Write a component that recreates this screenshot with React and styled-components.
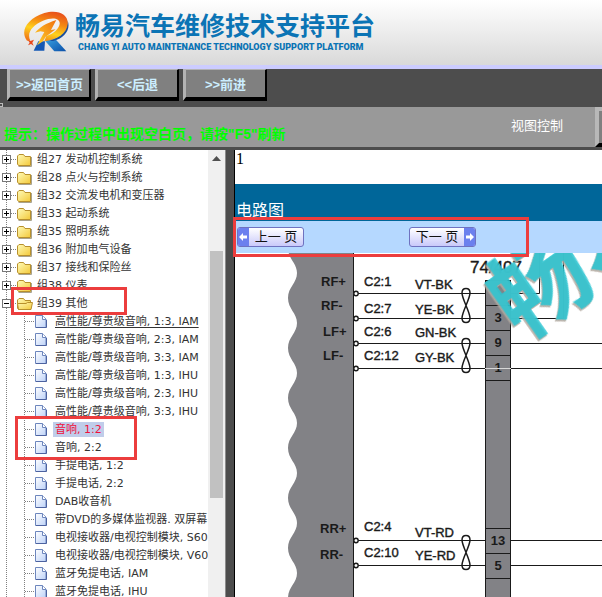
import React from 'react';
import styled, { createGlobalStyle } from 'styled-components';

const GlobalStyle = createGlobalStyle`
  * {
    box-sizing: border-box;
  }
  body {
    margin: 0;
    overflow: hidden;
    background: white;
  }
`;
const sans = '"Liberation Sans", "Noto Sans CJK SC", sans-serif';
const serif = '"Liberation Serif", "Noto Sans CJK SC", serif';

const Page = styled.div`
  display: flex;
  flex-direction: column;
  height: 100vh;
  font-family: ${sans};
`;
const Header = styled.header`
  display: flex;
  flex: none;
  align-items: center;
  gap: 6px;
  height: 69px;
  padding: 0 0 4px 23px;
  border-bottom: 4px solid #ccccff;
  background: linear-gradient(#ffffff, #d9d9d9);
`;
const Brand = styled.div`
  display: flex;
  flex-direction: column;
  padding-top: 4px;
  color: #0b74b5;
  font-weight: bold;
  white-space: nowrap;
`;
const BrandName = styled.h1`
  margin: 0;
  font-size: 25px;
  line-height: 28px;
`;
const BrandSub = styled.span`
  padding-left: 3px;
  font-family: Roboto, sans-serif;
  font-size: 9px;
  font-weight: 900;
  line-height: 14px;
`;
const Nav = styled.nav`
  display: flex;
  flex: none;
  align-items: flex-start;
  gap: 4px;
  height: 38px;
  background: #4d4d4d;
`;
const Mark = styled.span`
  align-self: flex-end;
  width: 3px;
  height: 4px;
  border: 1px solid #bbbbbb;
  border-left: 0;
`;
const NavButton = styled.button`
  width: 84px;
  height: 32px;
  padding: 0;
  border-style: solid;
  border-width: 1px 2px 4px 3px;
  border-color: #b3b3b3 black black #b3b3b3;
  background: #808080;
  color: #cceeff;
  font: bold 13px ${sans};
`;
const Notice = styled.div`
  display: flex;
  flex: none;
  align-items: flex-start;
  justify-content: space-between;
  height: 43px;
  border-bottom: 3px solid #4d4d4d;
  background: #999999;
  overflow: hidden;
`;
const Tip = styled.p`
  margin: 0;
  padding: 17px 0 0 4px;
  color: #00ff00;
  font-size: 14px;
  font-weight: bold;
  line-height: 20px;
  white-space: nowrap;
`;
const ViewTools = styled.div`
  display: flex;
  gap: 32px;
  margin-right: -33px;
  color: white;
  font-size: 13px;
  line-height: 38px;
  white-space: nowrap;
`;
const ViewButton = styled.button`
  width: 40px;
  height: 40px;
  border-style: solid;
  border-width: 4px;
  border-color: #b8b8b8 black black #b8b8b8;
  background: #808080;
`;
const Frames = styled.div`
  display: flex;
  flex: 1;
  min-height: 0;
`;
const Sidebar = styled.aside`
  position: relative;
  display: flex;
  flex: 0 0 225px;
  overflow: hidden;
`;
const Tree = styled.ul`
  flex: 1;
  min-width: 0;
  margin: 0;
  padding: 0;
  list-style: none;
  overflow: hidden;
  background: white;
`;
const TreeRow = styled.li`
  display: flex;
  align-items: center;
  height: 18px;
  white-space: nowrap;
  svg {
    flex: none;
  }
  svg.icon {
    margin-left: -1px;
  }
`;
const TreeLink = styled.a`
  padding: 0 2px;
  background: ${props => (props.$selected ? '#c0cdea' : 'transparent')};
  color: ${props => (props.$selected ? '#f0103c' : '#333333')};
  font: 11px/15px "DejaVu Sans", "Noto Sans CJK SC", sans-serif;
  text-decoration: ${props => (props.$underline ? 'underline' : 'none')};
  text-underline-offset: 2px;
`;
const ScrollTrack = styled.div`
  display: flex;
  flex: 0 0 17px;
  flex-direction: column;
  align-items: center;
  padding-bottom: 17px;
  background: #f0f0f0;
`;
const ScrollSpace = styled.span`
  flex: ${props => props.$grow};
`;
const ScrollThumb = styled.span`
  flex: 247;
  width: 13px;
  background: #c1c1c1;
`;
const Splitter = styled.div`
  flex: 0 0 10px;
  border-left: 1px solid #8c8c8c;
  border-right: 1px solid black;
  background: #4d4d4d;
`;
const Main = styled.main`
  display: flex;
  flex: 1;
  flex-direction: column;
  min-width: 0;
  background: white;
`;
const PageNumber = styled.p`
  flex: none;
  height: 34px;
  margin: 0;
  padding-left: 1px;
  font: 16px/18px ${serif};
`;
const Title = styled.h2`
  flex: none;
  height: 37px;
  margin: 0;
  padding: 16px 0 0 1px;
  background: #006699;
  color: white;
  font: 16px/21px ${serif};
`;
const Pager = styled.div`
  position: relative;
  display: flex;
  flex: none;
  align-items: center;
  gap: 105px;
  height: 32px;
  padding-left: 2px;
  background: #b5d8ff;
`;
const PageButton = styled.button`
  display: flex;
  align-items: stretch;
  justify-content: space-between;
  width: 67px;
  height: 20px;
  padding: 0;
  border: 1px solid #6f72c0;
  border-radius: 3px;
  overflow: hidden;
  background: linear-gradient(#ffffff, #c9c9fa);
  color: #111111;
  font: 13px/17px ${sans};
  svg {
    flex: none;
    background: #6c80ee;
  }
  span {
    flex: 1;
  }
`;
const Highlight = styled.div`
  position: absolute;
  top: ${props => props.$top}px;
  left: ${props => props.$left}px;
  width: ${props => props.$width}px;
  height: ${props => props.$height}px;
  border: 3px solid #ec3d3d;
  z-index: 2;
  pointer-events: none;
`;
const Diagram = styled.div`
  flex: 1;
  min-height: 0;
  overflow: hidden;
  svg {
    display: block;
  }
`;
const Label = styled.text`
  fill: #1a1a1a;
  font-family: ${sans};
  font-size: ${props => props.$size || 13}px;
  font-weight: ${props => (props.$bold ? 'bold' : 'normal')};
  stroke: #1a1a1a;
  stroke-width: ${props => (props.$bold ? 0 : 0.4)};
`;
const Watermark = styled.text`
  fill: #2cc5d2;
  fill-opacity: 0.88;
  filter: drop-shadow(-2px 1px 0 #b3aaa0);
  font-family: "Noto Sans CJK SC", sans-serif;
  font-size: 98px;
  font-weight: bold;
`;

const groups = [
  '组27 发动机控制系统',
  '组28 点火与控制系统',
  '组32 交流发电机和变压器',
  '组33 起动系统',
  '组35 照明系统',
  '组36 附加电气设备',
  '组37 接线和保险丝',
  '组38 仪表',
  '组39 其他',
];
const documents = [
  '高性能/尊贵级音响, 1:3, IAM',
  '高性能/尊贵级音响, 2:3, IAM',
  '高性能/尊贵级音响, 3:3, IAM',
  '高性能/尊贵级音响, 1:3, IHU',
  '高性能/尊贵级音响, 2:3, IHU',
  '高性能/尊贵级音响, 3:3, IHU',
  '音响, 1:2',
  '音响, 2:2',
  '手提电话, 1:2',
  '手提电话, 2:2',
  'DAB收音机',
  '带DVD的多媒体监视器. 双屏幕',
  '电视接收器/电视控制模块, S60',
  '电视接收器/电视控制模块, V60',
  '蓝牙免提电话, IAM',
  '蓝牙免提电话, IHU',
];

function Logo() {
  return (
    <svg width="46" height="42" viewBox="40 28 138 126" aria-hidden="true">
      <defs>
        <linearGradient id="ring" x1="0.7" y1="0" x2="0.3" y2="1">
          <stop offset="0" stopColor="#e8501c" />
          <stop offset="0.35" stopColor="#f58a12" />
          <stop offset="0.65" stopColor="#ffd21c" />
          <stop offset="1" stopColor="#f07818" />
        </linearGradient>
        <linearGradient id="bolt" x1="1" y1="0" x2="0" y2="1">
          <stop offset="0" stopColor="#f0700e" />
          <stop offset="1" stopColor="#ffd52a" />
        </linearGradient>
        <linearGradient id="leg" x1="0" y1="0" x2="1" y2="1">
          <stop offset="0" stopColor="#3ba7e6" />
          <stop offset="1" stopColor="#0b4fa8" />
        </linearGradient>
      </defs>
      <path d="M86 122 L106 122 L104 150 L72 150 Z" fill="#1558b4" />
      <path d="M106 120 L132 110 L170 152 L134 152 Z" fill="url(#leg)" />
      <path d="M174 60 C184 86 164 114 130 121 L120 121 C152 106 172 90 174 60 Z" fill="#1c4f9c" />
      <path
        fillRule="evenodd"
        fill="url(#ring)"
        d="M52 120 C30 92 52 54 104 37 C146 25 177 42 174 70 C172 98 142 118 104 122 L110 106 C132 100 148 84 150 70 C152 52 128 48 100 60 C68 74 50 96 62 120 Z"
      />
      <path d="M76 96 C90 80 108 68 140 58 L124 88 L138 86 L108 108 L100 122 L82 134 L104 94 L92 92 Z" fill="url(#bolt)" />
      <path d="M54 117 L62 121 L73 117 L68 126 L72 135 L64 130 L55 134 L60 126 Z" fill="#e8481c" />
    </svg>
  );
}

function Joint({ sign }) {
  return (
    <svg width="18" height="18" aria-hidden="true">
      <g stroke="#808080" strokeDasharray="1 1">
        <line x1="6.5" x2="6.5" y1="0" y2="18" />
        {sign !== 'none' && <line x1="7" x2="18" y1="9.5" y2="9.5" />}
      </g>
      {(sign === 'plus' || sign === 'minus') && (
        <g>
          <rect x="2.5" y="5.5" width="8" height="8" fill="white" stroke="#777777" />
          <line x1="4" x2="9" y1="9.5" y2="9.5" stroke="black" />
          {sign === 'plus' && <line x1="6.5" x2="6.5" y1="7" y2="12" stroke="black" />}
        </g>
      )}
    </svg>
  );
}

function Folder({ open }) {
  return (
    <svg className="icon" width="18" height="18" aria-hidden="true">
      <defs>
        <linearGradient id="folder" x1="0" y1="0" x2="1" y2="1">
          <stop offset="0" stopColor="#fffbb8" />
          <stop offset="1" stopColor="#f3c93a" />
        </linearGradient>
      </defs>
      <path d="M0.5 14 V6 L2 4.5 H6.5 L8 6.5 H13.5 V15.5 H1.5 Z" fill="url(#folder)" stroke="#b8902c" />
      {open
        ? <path d="M1.5 15.5 L0.5 9.5 H9 L10.5 8.5 H15.5 L14 15.5 Z" fill="url(#folder)" stroke="#b8902c" />
        : <path d="M1.5 16.5 H14.5 V7" fill="none" stroke="#a9a38e" />}
    </svg>
  );
}

function Doc() {
  return (
    <svg className="icon" width="18" height="18" aria-hidden="true">
      <defs>
        <linearGradient id="doc" x1="0" y1="0" x2="1" y2="1">
          <stop offset="0" stopColor="#ffffff" />
          <stop offset="1" stopColor="#bdd2f8" />
        </linearGradient>
      </defs>
      <path d="M0.5 3.5 H7.5 L11 7 V15.5 H0.5 Z" fill="url(#doc)" stroke="#6d86bd" />
      <path d="M7.5 3.5 V7.5 H11" fill="white" stroke="#6d86bd" />
      <path d="M1 15.5 H11.5 V8" fill="none" stroke="#4c62a0" />
    </svg>
  );
}

// torn edge of the control unit, one bulge every 50px
function waveEdge() {
  let d = 'M118 -30 H62';
  for (let y = -30; y < 700; y += 50) {
    d += ` C62 ${y + 10} 53 ${y + 14} 53 ${y + 25} C53 ${y + 36} 62 ${y + 40} 62 ${y + 50}`;
  }
  return `${d} H118 Z`;
}

function Twist({ y }) {
  return (
    <path
      transform={`translate(231 ${y})`}
      d="M-4 0 C-4 -6 4 -6 4 0 C4 6 -4 19 -4 25 C-4 31 4 31 4 25 C4 19 -4 6 -4 0 Z"
      fill="none"
      stroke="#1a1a1a"
      strokeWidth="1.5"
    />
  );
}

const pins = [
  { y: 40, name: 'RF+', nameX: 86, nameY: 33, pin: 'C2:1', pinY: 33, wire: 'VT-BK', wireY: 36 },
  { y: 65, name: 'RF-', nameX: 86, nameY: 57, pin: 'C2:7', pinY: 60, wire: 'YE-BK', wireY: 61 },
  { y: 90, name: 'LF+', nameX: 88, nameY: 83, pin: 'C2:6', pinY: 83, wire: 'GN-BK', wireY: 84 },
  { y: 115, name: 'LF-', nameX: 88, nameY: 107, pin: 'C2:12', pinY: 107, wire: 'GY-BK', wireY: 109 },
  { y: 287, name: 'RR+', nameX: 85, nameY: 280, pin: 'C2:4', pinY: 278, wire: 'VT-RD', wireY: 284 },
  { y: 312, name: 'RR-', nameX: 85, nameY: 306, pin: 'C2:10', pinY: 304, wire: 'YE-RD', wireY: 307 },
];
const slots = [
  { n: '3', y: 69 },
  { n: '9', y: 94 },
  { n: '1', y: 119 },
  { n: '13', y: 292 },
  { n: '5', y: 317 },
];

function Circuit() {
  return (
    <svg width="1600" height="700" role="img" aria-label="电路图">
      <path d={waveEdge()} fill="#828286" />
      <line x1="118.5" x2="118.5" y1="0" y2="700" stroke="#1a1a1a" />
      <rect x="250.5" y="27.5" width="25" height="680" fill="#828286" stroke="#1a1a1a" />
      {[52, 77, 102, 127, 275, 300, 325].map(y => (
        <line key={y} x1="250" x2="276" y1={y + 0.5} y2={y + 0.5} stroke="#1a1a1a" />
      ))}
      {pins.map(pin => (
        <g key={pin.name}>
          <line x1="118" x2="250" y1={pin.y + 0.5} y2={pin.y + 0.5} stroke="#1a1a1a" />
          {pin.y > 80 && <line x1="276" x2="1600" y1={pin.y + 0.5} y2={pin.y + 0.5} stroke="#1a1a1a" />}
          <circle cx="121" cy={pin.y + 0.5} r="2.2" fill="white" stroke="#1a1a1a" strokeWidth="1.4" />
          <Label $bold x={pin.nameX} y={pin.nameY}>{pin.name}</Label>
          <Label x="129" y={pin.pinY}>{pin.pin}</Label>
          <Label x="180" y={pin.wireY}>{pin.wire}</Label>
        </g>
      ))}
      <path d="M276 40.5 H304.5 V0 M276 65.5 H328.5 V0" fill="none" stroke="#1a1a1a" />
      <Twist y={40} />
      <Twist y={90} />
      <Twist y={287} />
      <Label $size={17} x="235" y="20">74/407</Label>
      {slots.map(slot => (
        <Label $bold key={slot.n} x="263" y={slot.y} textAnchor="middle">{slot.n}</Label>
      ))}
      <line x1="250" x2="276" y1="115.5" y2="115.5" stroke="#d8d8d8" />
      <g transform="translate(285 89) rotate(-35)">
        <Watermark>畅易</Watermark>
      </g>
    </svg>
  );
}

function Arrow({ back }) {
  return (
    <svg width="11" height="18" aria-hidden="true">
      <path
        d={back ? 'M1 9 L5 5 V7.5 H9 V10.5 H5 V13 Z' : 'M10 9 L6 5 V7.5 H2 V10.5 H6 V13 Z'}
        fill="white"
      />
    </svg>
  );
}

class App extends React.PureComponent {
  render() {
    return (
      <Page>
        <GlobalStyle />
        <Header>
          <Logo />
          <Brand>
            <BrandName>畅易汽车维修技术支持平台</BrandName>
            <BrandSub>CHANG YI AUTO MAINTENANCE TECHNOLOGY SUPPORT PLATFORM</BrandSub>
          </Brand>
        </Header>
        <Nav>
          <Mark />
          <NavButton>&gt;&gt;返回首页</NavButton>
          <NavButton>&lt;&lt;后退</NavButton>
          <NavButton>&gt;&gt;前进</NavButton>
        </Nav>
        <Notice>
          <Tip>提示：操作过程中出现空白页，请按"F5"刷新</Tip>
          <ViewTools>
            <span>视图控制</span>
            <ViewButton aria-label="视图控制" />
          </ViewTools>
        </Notice>
        <Frames>
          <Sidebar>
            <Tree>
              {groups.map((name, key) => {
                const open = key === groups.length - 1;
                return (
                  <TreeRow key={name}>
                    <Joint sign={open ? 'minus' : 'plus'} />
                    <Folder open={open} />
                    <TreeLink href="#">{name}</TreeLink>
                  </TreeRow>
                );
              })}
              {documents.map((name, key) => (
                <TreeRow key={name}>
                  <Joint sign="none" />
                  <Joint />
                  <Doc />
                  <TreeLink href="#" $underline={key === 0} $selected={key === 6}>{name}</TreeLink>
                </TreeRow>
              ))}
            </Tree>
            <ScrollTrack>
              <svg width="17" height="17" aria-hidden="true">
                <path d="M4 11 L8.5 6 L13 11 Z" fill="#505050" />
              </svg>
              <ScrollSpace $grow={84} />
              <ScrollThumb />
              <ScrollSpace $grow={82} />
            </ScrollTrack>
            <Highlight $top={137} $left={11} $width={116} $height={28} />
            <Highlight $top={266} $left={15} $width={122} $height={44} />
          </Sidebar>
          <Splitter />
          <Main>
            <PageNumber>1</PageNumber>
            <Title>电路图</Title>
            <Pager>
              <PageButton>
                <Arrow back />
                <span>上一 页</span>
              </PageButton>
              <PageButton>
                <span>下一 页</span>
                <Arrow />
              </PageButton>
              <Highlight $top={-4} $left={-2} $width={296} $height={40} />
            </Pager>
            <Diagram>
              <Circuit />
            </Diagram>
          </Main>
        </Frames>
      </Page>
    );
  }
}

export default App;
